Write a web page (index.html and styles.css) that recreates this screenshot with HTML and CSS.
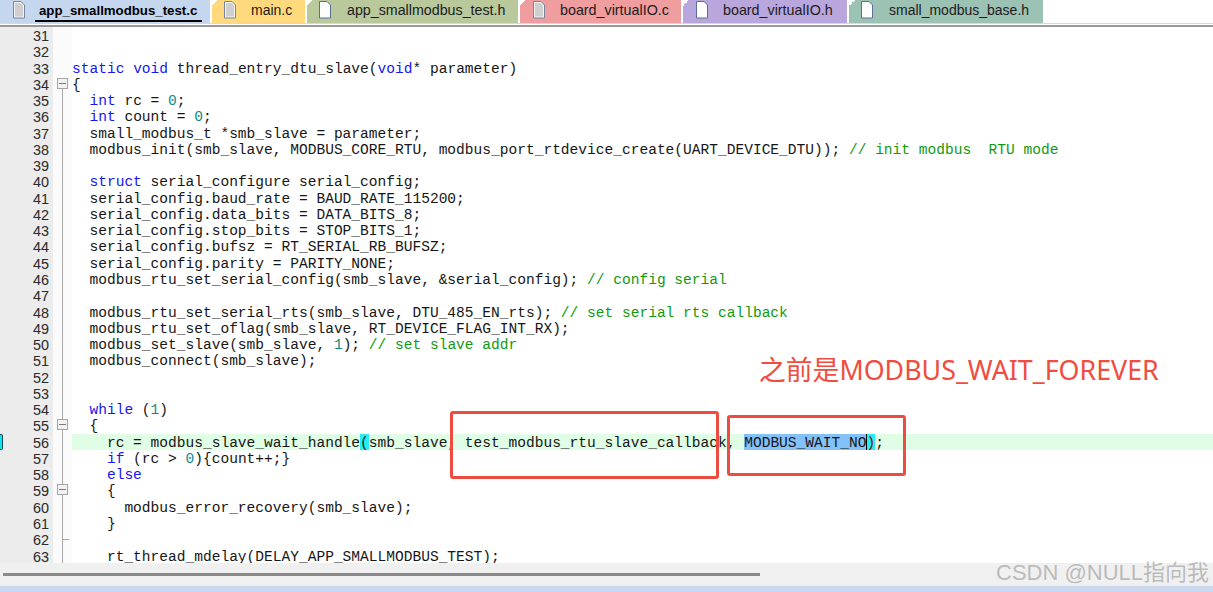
FILE: index.html
```html
<!DOCTYPE html>
<html lang="en">
<head>
<meta charset="utf-8">
<title>app_smallmodbus_test.c</title>
<link rel="stylesheet" href="styles.css">
</head>
<body>
<div class="page">
  <div class="tabs">
    <div class="tab t1 active"><svg class="doc" viewBox="0 0 14 18"><path d="M1.5 .5H9L12.5 4V17H1.5Z" fill="#f4f4f4" stroke="#77849c"/><path d="M3 2H8.5L11 4.5V15.5H3Z" fill="#cfcfcf"/></svg><span class="label">app_smallmodbus_test.c</span></div>
    <div class="tab t2"><svg class="doc" viewBox="0 0 14 18"><path d="M1.5 .5H9L12.5 4V17H1.5Z" fill="#f4f4f4" stroke="#77849c"/><path d="M3 2H8.5L11 4.5V15.5H3Z" fill="#cfcfcf"/></svg><span class="label">main.c</span></div>
    <div class="tab t3"><svg class="doc" viewBox="0 0 14 18"><path d="M1.5 .5H9L12.5 4V17H1.5Z" fill="#fdfdfd" stroke="#5d6f96"/></svg><span class="label">app_smallmodbus_test.h</span></div>
    <div class="tab t4"><svg class="doc" viewBox="0 0 14 18"><path d="M1.5 .5H9L12.5 4V17H1.5Z" fill="#f4f4f4" stroke="#77849c"/><path d="M3 2H8.5L11 4.5V15.5H3Z" fill="#cfcfcf"/></svg><span class="label">board_virtualIO.c</span></div>
    <div class="tab t5"><svg class="doc" viewBox="0 0 14 18"><path d="M1.5 .5H9L12.5 4V17H1.5Z" fill="#fdfdfd" stroke="#5d6f96"/></svg><span class="label">board_virtualIO.h</span></div>
    <div class="tab t6"><svg class="doc" viewBox="0 0 14 18"><path d="M1.5 .5H9L12.5 4V17H1.5Z" fill="#fdfdfd" stroke="#5d6f96"/></svg><span class="label">small_modbus_base.h</span></div>
    <div class="tab-rest"></div>
  </div>
  <div class="editor">
    <div class="row"><span class="num">31</span><span class="fold none"></span><span class="code"></span></div>
    <div class="row"><span class="num">32</span><span class="fold none"></span><span class="code"></span></div>
    <div class="row"><span class="num">33</span><span class="fold none"></span><span class="code"><b>static</b> <b>void</b> thread_entry_dtu_slave(<b>void</b>* parameter)</span></div>
    <div class="row"><span class="num">34</span><span class="fold half"><i class="box"></i></span><span class="code">{</span></div>
    <div class="row"><span class="num">35</span><span class="fold"></span><span class="code">  <b>int</b> rc = <u>0</u>;</span></div>
    <div class="row"><span class="num">36</span><span class="fold"></span><span class="code">  <b>int</b> count = <u>0</u>;</span></div>
    <div class="row"><span class="num">37</span><span class="fold"></span><span class="code">  small_modbus_t *smb_slave = parameter;</span></div>
    <div class="row"><span class="num">38</span><span class="fold"></span><span class="code">  modbus_init(smb_slave, MODBUS_CORE_RTU, modbus_port_rtdevice_create(UART_DEVICE_DTU)); <em>// init modbus  RTU mode</em></span></div>
    <div class="row"><span class="num">39</span><span class="fold"></span><span class="code"></span></div>
    <div class="row"><span class="num">40</span><span class="fold"></span><span class="code">  <b>struct</b> serial_configure serial_config;</span></div>
    <div class="row"><span class="num">41</span><span class="fold"></span><span class="code">  serial_config.baud_rate = BAUD_RATE_115200;</span></div>
    <div class="row"><span class="num">42</span><span class="fold"></span><span class="code">  serial_config.data_bits = DATA_BITS_8;</span></div>
    <div class="row"><span class="num">43</span><span class="fold"></span><span class="code">  serial_config.stop_bits = STOP_BITS_1;</span></div>
    <div class="row"><span class="num">44</span><span class="fold"></span><span class="code">  serial_config.bufsz = RT_SERIAL_RB_BUFSZ;</span></div>
    <div class="row"><span class="num">45</span><span class="fold"></span><span class="code">  serial_config.parity = PARITY_NONE;</span></div>
    <div class="row"><span class="num">46</span><span class="fold"></span><span class="code">  modbus_rtu_set_serial_config(smb_slave, &amp;serial_config); <em>// config serial</em></span></div>
    <div class="row"><span class="num">47</span><span class="fold"></span><span class="code"></span></div>
    <div class="row"><span class="num">48</span><span class="fold"></span><span class="code">  modbus_rtu_set_serial_rts(smb_slave, DTU_485_EN_rts); <em>// set serial rts callback</em></span></div>
    <div class="row"><span class="num">49</span><span class="fold"></span><span class="code">  modbus_rtu_set_oflag(smb_slave, RT_DEVICE_FLAG_INT_RX);</span></div>
    <div class="row"><span class="num">50</span><span class="fold"></span><span class="code">  modbus_set_slave(smb_slave, <u>1</u>); <em>// set slave addr</em></span></div>
    <div class="row"><span class="num">51</span><span class="fold"></span><span class="code">  modbus_connect(smb_slave);</span></div>
    <div class="row"><span class="num">52</span><span class="fold"></span><span class="code"></span></div>
    <div class="row"><span class="num">53</span><span class="fold"></span><span class="code"></span></div>
    <div class="row"><span class="num">54</span><span class="fold"></span><span class="code">  <b>while</b> (<u>1</u>)</span></div>
    <div class="row"><span class="num">55</span><span class="fold"><i class="box"></i></span><span class="code">  {</span></div>
    <div class="row"><span class="num">56</span><span class="fold"></span><span class="code current">    rc = modbus_slave_wait_handle<span class="brace">(</span>smb_slave, test_modbus_rtu_slave_callback, <span class="sel">MODBUS_WAIT_NO</span><span class="brace caret">)</span>;</span><span class="mark"></span></div>
    <div class="row"><span class="num">57</span><span class="fold"></span><span class="code">    <b>if</b> (rc &gt; <u>0</u>){count++;}</span></div>
    <div class="row"><span class="num">58</span><span class="fold"></span><span class="code">    <b>else</b></span></div>
    <div class="row"><span class="num">59</span><span class="fold"><i class="box"></i></span><span class="code">    {</span></div>
    <div class="row"><span class="num">60</span><span class="fold"></span><span class="code">      modbus_error_recovery(smb_slave);</span></div>
    <div class="row"><span class="num">61</span><span class="fold"></span><span class="code">    }</span></div>
    <div class="row"><span class="num">62</span><span class="fold"><i class="tick"></i></span><span class="code"></span></div>
    <div class="row"><span class="num">63</span><span class="fold"></span><span class="code">    rt_thread_mdelay(DELAY_APP_SMALLMODBUS_TEST);</span></div>
  </div>
  <div class="hscroll"><div class="thumb"></div></div>
  <div class="status"></div>
  <div class="anno box-a"></div>
  <div class="anno box-b"></div>
  <div class="note">之前是MODBUS_WAIT_FOREVER</div>
  <div class="watermark">CSDN @NULL指向我</div>
</div>
</body>
</html>
```
FILE: styles.css
```css
html, body {
  margin: 0;
  padding: 0;
  background: #fff;
  overflow: hidden;
}
.page {
  position: relative;
  width: 1213px;
  height: 592px;
  overflow: hidden;
  display: flex;
  flex-direction: column;
}
.tabs {
  display: flex;
  height: 24px;
  box-sizing: border-box;
  border-bottom: 1px solid #d8d8d8;
  gap: 2px;
  flex: none;
}
.tab {
  position: relative;
  display: flex;
  align-items: center;
  height: 23px;
  padding-bottom: 3px;
  flex: none;
  box-sizing: border-box;
  font: 14px "Liberation Sans", Arial, sans-serif;
  color: #1c1c1c;
  white-space: nowrap;
}
.tab::before {
  content: "";
  position: absolute;
  left: 0;
  top: 0;
  width: 6px;
  height: 6px;
  background: linear-gradient(135deg, #fff 50%, rgba(255,255,255,0) 50%);
}
.doc {
  width: 14px;
  height: 18px;
  flex: none;
}
.t1 { width: 210px; padding-left: 12px; background: #c5d6ef; font-weight: 700; font-size: 13.25px; color: #000; }
.t1 .label { align-self: flex-start; margin: 2px 0 0 9px; border-bottom: 2px solid #000; padding: 0 5px 0 4px; line-height: 18px; }
.t1::before { display: none; }
.t2 { width: 93px; padding-left: 11px; background: #ffd97c; }
.t2 .label { margin-left: 14px; }
.t3 { width: 211px; padding-left: 11px; background: #b9c99c; font-size: 14.25px; }
.t3 .label { margin-left: 15px; }
.t4 { width: 161px; padding-left: 12px; background: #ef9d9e; font-size: 14.3px; }
.t4 .label { margin-left: 14px; }
.t5 { width: 164px; padding-left: 12px; background: #b9a6dd; font-size: 14.3px; }
.t5 .label { margin-left: 14px; }
.t6 { width: 194px; padding-left: 11px; background: #9cc2b4; }
.t6 .label { margin-left: 15px; }
.tab-rest { flex: 1; }
.editor {
  margin-top: 1px;
  border-top: 2px solid #9a9a9a;
  height: 536px;
  overflow: hidden;
  flex: none;
}
.row {
  position: relative;
  display: flex;
  height: 16.28px;
  font: 14.56px/18.28px "Liberation Mono", "Courier New", monospace;
  color: #161616;
}
.num {
  width: 53px;
  box-sizing: border-box;
  padding-right: 4px;
  text-align: right;
  background: #ececec;
  font: 14.4px/18.28px "Liberation Sans", Arial, sans-serif;
  color: #2a2a2a;
  flex: none;
}
.fold {
  position: relative;
  width: 19px;
  flex: none;
  background-color: #fbfbfb;
  background-image: linear-gradient(#a8a8a8, #a8a8a8);
  background-repeat: no-repeat;
  background-size: 1px 100%;
  background-position: 9px 0;
}
.fold.none { background-image: none; }
.fold.half { background-size: 1px 50%; background-position: 9px 100%; }
.box {
  position: absolute;
  left: 4px;
  top: 2px;
  width: 11px;
  height: 11px;
  box-sizing: border-box;
  border: 1px solid #a5a5a5;
  background: linear-gradient(#7c7c7c, #7c7c7c) center / 7px 1px no-repeat #f2f2f2;
}
.tick {
  position: absolute;
  left: 9px;
  top: 8px;
  width: 7px;
  height: 1px;
  background: #a8a8a8;
}
.code {
  flex: 1;
  white-space: pre;
}
.code b { font-weight: 400; color: #1616f0; }
.code u { text-decoration: none; color: #0f8a8a; }
.code em { font-style: normal; color: #109a10; }
.current { background: #e0fde6; }
.brace { background: #27eef5; display: inline-block; height: 16.28px; vertical-align: top; }
.sel { background: #84c1f8; display: inline-block; height: 16.28px; vertical-align: top; }
.caret { box-shadow: inset 1px 0 0 #000; color: #6d0f0f; }
.mark {
  position: absolute;
  left: 0;
  top: 0;
  width: 3px;
  height: 16px;
  box-sizing: border-box;
  background: #14e3ee;
  border: 1px solid #0d4c55;
  border-left: 0;
  border-radius: 0 2px 2px 0;
}
.hscroll {
  height: 23px;
  background: #f0f0f0;
  flex: none;
  display: flex;
  align-items: center;
  padding-left: 3px;
  box-sizing: border-box;
}
.thumb {
  width: 757px;
  height: 3px;
  background: #8b8b8b;
}
.status {
  flex: 1;
  background: #cad8f0;
}
.anno {
  position: absolute;
  box-sizing: border-box;
  border: 3px solid #ee4c41;
  border-radius: 3px;
}
.box-a { left: 450px; top: 411px; width: 269px; height: 68px; }
.box-b { left: 727px; top: 415px; width: 179px; height: 61px; }
.note {
  position: absolute;
  left: 759px;
  top: 352px;
  font: 26.8px/36px "Noto Sans", "Noto Sans CJK SC", sans-serif;
  color: #f04d40;
  white-space: nowrap;
}
.watermark {
  position: absolute;
  left: 996px;
  top: 557px;
  font: 22px/32px "Liberation Sans", "Noto Sans CJK SC", sans-serif;
  color: rgba(150,150,150,.6);
  white-space: nowrap;
}
```
